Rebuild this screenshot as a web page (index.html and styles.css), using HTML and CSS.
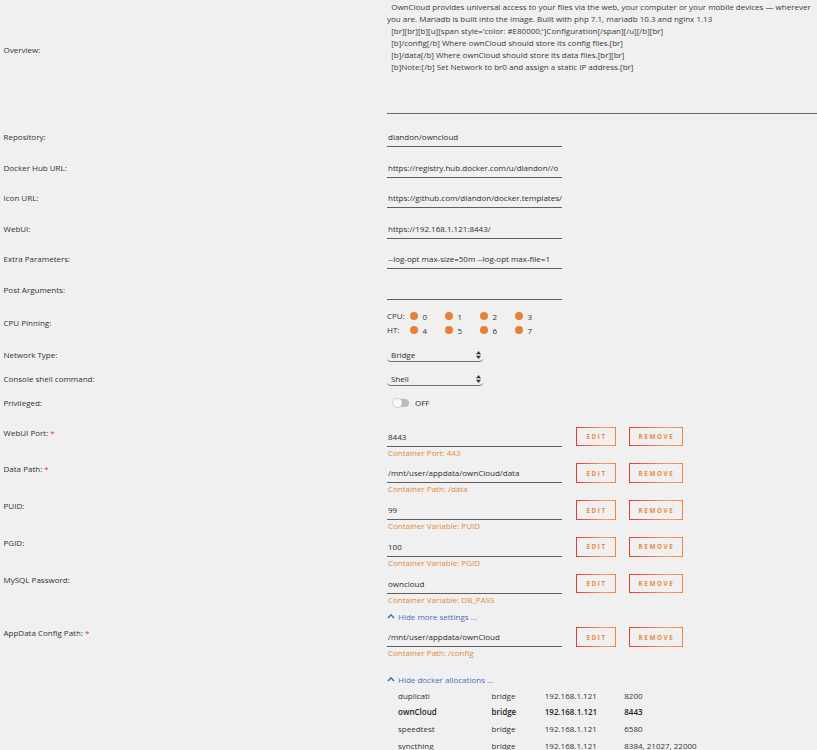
FILE: index.html
```html
<!DOCTYPE html>
<html lang="en">
<head>
<meta charset="utf-8">
<title>Update Container: ownCloud</title>
<link rel="stylesheet" href="styles.css">
</head>
<body>
<div class="form">

  <div class="row overview-row">
    <div class="label overview-label">Overview:</div>
    <div class="overview-text">  OwnCloud provides universal access to your files via the web, your computer or your mobile devices — wherever
you are. Mariadb is built into the image. Built with php 7.1, mariadb 10.3 and nginx 1.13
  [br][br][b][u][span style='color: #E80000;']Configuration[/span][/u][/b][br]
  [b]/config[/b] Where ownCloud should store its config files.[br]
  [b]/data[/b] Where ownCloud should store its data files.[br][br]
  [b]Note:[/b] Set Network to br0 and assign a static IP address.[br]</div>
  </div>

  <div class="basic">
    <div class="row">
      <div class="label">Repository:</div>
      <div class="input">dlandon/owncloud</div>
    </div>
    <div class="row">
      <div class="label">Docker Hub URL:</div>
      <div class="input">https://registry.hub.docker.com/u/dlandon//o</div>
    </div>
    <div class="row">
      <div class="label">Icon URL:</div>
      <div class="input">https://github.com/dlandon/docker.templates/</div>
    </div>
    <div class="row">
      <div class="label">WebUI:</div>
      <div class="input">https://192.168.1.121:8443/</div>
    </div>
    <div class="row">
      <div class="label">Extra Parameters:</div>
      <div class="input">--log-opt max-size=50m --log-opt max-file=1</div>
    </div>
    <div class="row">
      <div class="label">Post Arguments:</div>
      <div class="input"></div>
    </div>
  </div>

  <div class="row cpu-row">
    <div class="label cpu-label">CPU Pinning:</div>
    <div class="cpu">
      <div class="cpu-line">
        <span class="cpu-name">CPU:</span>
        <span class="core"><i class="dot"></i>0</span>
        <span class="core"><i class="dot"></i>1</span>
        <span class="core"><i class="dot"></i>2</span>
        <span class="core"><i class="dot"></i>3</span>
      </div>
      <div class="cpu-line">
        <span class="cpu-name">HT:</span>
        <span class="core"><i class="dot"></i>4</span>
        <span class="core"><i class="dot"></i>5</span>
        <span class="core"><i class="dot"></i>6</span>
        <span class="core"><i class="dot"></i>7</span>
      </div>
    </div>
  </div>

  <div class="row select-row first-select">
    <div class="label">Network Type:</div>
    <div class="select">
      <span>Bridge</span>
      <svg class="arrows" width="5" height="8" viewBox="0 0 5 8"><polygon points="0,3.3 2.5,0 5,3.3"/><polygon points="0,4.7 2.5,8 5,4.7"/></svg>
    </div>
  </div>
  <div class="row select-row">
    <div class="label">Console shell command:</div>
    <div class="select">
      <span>Shell</span>
      <svg class="arrows" width="5" height="8" viewBox="0 0 5 8"><polygon points="0,3.3 2.5,0 5,3.3"/><polygon points="0,4.7 2.5,8 5,4.7"/></svg>
    </div>
  </div>
  <div class="row priv-row">
    <div class="label">Privileged:</div>
    <div class="toggle-wrap">
      <span class="switch"></span>
      <span class="off">OFF</span>
    </div>
  </div>

  <div class="ports">
    <div class="row port-row">
      <div class="label">WebUI Port: <span class="req">*</span></div>
      <div class="port-field">
        <div class="input">8443</div>
        <div class="hint">Container Port: 443</div>
      </div>
      <button class="btn btn-edit">EDIT</button>
      <button class="btn btn-remove">REMOVE</button>
    </div>
    <div class="row port-row">
      <div class="label">Data Path: <span class="req">*</span></div>
      <div class="port-field">
        <div class="input">/mnt/user/appdata/ownCloud/data</div>
        <div class="hint">Container Path: /data</div>
      </div>
      <button class="btn btn-edit">EDIT</button>
      <button class="btn btn-remove">REMOVE</button>
    </div>
    <div class="row port-row">
      <div class="label">PUID:</div>
      <div class="port-field">
        <div class="input">99</div>
        <div class="hint">Container Variable: PUID</div>
      </div>
      <button class="btn btn-edit">EDIT</button>
      <button class="btn btn-remove">REMOVE</button>
    </div>
    <div class="row port-row">
      <div class="label">PGID:</div>
      <div class="port-field">
        <div class="input">100</div>
        <div class="hint">Container Variable: PGID</div>
      </div>
      <button class="btn btn-edit">EDIT</button>
      <button class="btn btn-remove">REMOVE</button>
    </div>
    <div class="row port-row">
      <div class="label">MySQL Password:</div>
      <div class="port-field">
        <div class="input">owncloud</div>
        <div class="hint">Container Variable: DB_PASS</div>
      </div>
      <button class="btn btn-edit">EDIT</button>
      <button class="btn btn-remove">REMOVE</button>
    </div>
    <div class="row link-row">
      <div class="label"></div>
      <a class="toggle-link" href="#"><svg width="8" height="6" viewBox="0 0 8 6"><polyline points="1,5 4,1.8 7,5"/></svg>Hide more settings ...</a>
    </div>
    <div class="row port-row">
      <div class="label">AppData Config Path: <span class="req">*</span></div>
      <div class="port-field">
        <div class="input">/mnt/user/appdata/ownCloud</div>
        <div class="hint">Container Path: /config</div>
      </div>
      <button class="btn btn-edit">EDIT</button>
      <button class="btn btn-remove">REMOVE</button>
    </div>
  </div>

  <div class="row alloc-link-row">
    <div class="label"></div>
    <a class="toggle-link" href="#"><svg width="8" height="6" viewBox="0 0 8 6"><polyline points="1,5 4,1.8 7,5"/></svg>Hide docker allocations ...</a>
  </div>
  <div class="row">
    <div class="label"></div>
    <table class="alloc">
      <tr><td>duplicati</td><td>bridge</td><td>192.168.1.121</td><td>8200</td></tr>
      <tr class="current"><td>ownCloud</td><td>bridge</td><td>192.168.1.121</td><td>8443</td></tr>
      <tr><td>speedtest</td><td>bridge</td><td>192.168.1.121</td><td>6580</td></tr>
      <tr><td>syncthing</td><td>bridge</td><td>192.168.1.121</td><td>8384, 21027, 22000</td></tr>
    </table>
  </div>

</div>
</body>
</html>
```

FILE: styles.css
```css
html, body {
  margin: 0;
  padding: 0;
  background: #f0f0f0;
}

body {
  font-family: "Open Sans", "Liberation Sans", sans-serif;
  font-size: 8px;
  line-height: 12px;
  color: #333;
  overflow: hidden;
}

.form {
  display: flex;
  flex-direction: column;
}

.row {
  display: flex;
  align-items: flex-start;
}

.label {
  width: 387px;
  flex: none;
  box-sizing: border-box;
  padding-left: 3.5px;
  white-space: nowrap;
}

.req {
  color: #e03030;
}

/* Overview description box */
.overview-label {
  padding-top: 44px;
}

.overview-text {
  flex: 1;
  height: 114px;
  padding-top: 1px;
  box-sizing: border-box;
  border-bottom: 1px solid #6a6a6a;
  white-space: pre;
  overflow: hidden;
  color: #3a3a3a;
  line-height: 11.9px;
}

/* Plain text inputs */
.basic {
  margin-top: 17px;
  display: flex;
  flex-direction: column;
  gap: 14.5px;
}

.input {
  width: 175px;
  height: 16px;
  box-sizing: border-box;
  padding: 0 0 3px 1px;
  border-bottom: 1px solid #5e5e5e;
  white-space: nowrap;
  overflow: hidden;
  color: #2e2e2e;
}

/* CPU pinning */
.cpu-row {
  margin-top: 9.5px;
}

.cpu-label {
  padding-top: 8px;
}

.cpu-line {
  display: flex;
  align-items: center;
  height: 14px;
}

.cpu-name {
  width: 22.5px;
}

.core {
  display: flex;
  align-items: center;
  width: 35px;
  position: relative;
  top: 0.5px;
}

.dot {
  width: 8px;
  height: 8px;
  border-radius: 50%;
  background: #e8803a;
  margin-right: 5px;
  position: relative;
  top: -1px;
}

/* Selects */
.select-row {
  margin-top: 11px;
}

.first-select {
  margin-top: 12px;
}

.select {
  width: 96px;
  height: 13px;
  box-sizing: border-box;
  padding: 0 2px 1px 4px;
  border-bottom: 1px solid #707070;
  border-radius: 0 0 4px 4px;
  display: flex;
  align-items: center;
  justify-content: space-between;
  color: #2e2e2e;
}

.arrows {
  fill: #333;
}

/* Privileged switch */
.priv-row {
  margin-top: 11px;
}

.toggle-wrap {
  display: flex;
  align-items: center;
  height: 12px;
  padding-left: 6px;
}

.switch {
  position: relative;
  width: 16px;
  height: 8px;
  border-radius: 4px;
  background: #bdbdbd;
  box-sizing: border-box;
}

.switch::before {
  content: "";
  position: absolute;
  left: 0;
  top: 0;
  width: 9px;
  height: 8px;
  border-radius: 4px;
  background: #fafafa;
  box-shadow: 0 0 0 0.5px #b0b0b0;
}

.off {
  margin-left: 6px;
  color: #2e2e2e;
}

/* Port / path / variable rows */
.ports {
  margin-top: 17.7px;
  display: flex;
  flex-direction: column;
  gap: 4.8px;
}

.port-row {
  height: 32px;
}

.port-field {
  width: 175px;
}

.port-field .input {
  height: 20px;
  padding: 4px 0 3px 1px;
}

.hint {
  color: #e08a3a;
  padding-left: 1px;
}

.btn {
  height: 19.5px;
  padding: 0;
  margin: 0;
  font-family: "Open Sans", "Liberation Sans", sans-serif;
  font-weight: 700;
  font-size: 6.3px;
  letter-spacing: 1.6px;
  text-indent: 1.6px;
  background: transparent;
  border: 1px solid transparent;
  border-image: linear-gradient(90deg, #e03a3a, #f2a070 75%, #f0843a) 1;
  color: #ea8a48;
}

.btn-edit {
  width: 40.3px;
  margin-left: 13.7px;
}

.btn-remove {
  width: 54px;
  margin-left: 12.7px;
}

/* Show / hide links */
.link-row {
  height: 12px;
}

.toggle-link {
  display: flex;
  align-items: center;
  color: #4a6cc0;
  text-decoration: none;
}

.toggle-link svg {
  fill: none;
  stroke: #4a6cc0;
  stroke-width: 1.6;
  margin-right: 3px;
  position: relative;
  top: -1px;
}

.alloc-link-row {
  margin-top: 14.5px;
}

/* Docker allocations */
.alloc {
  border-collapse: collapse;
  margin-top: 1.3px;
  margin-left: 11px;
}

.alloc td {
  padding: 0;
  height: 16.7px;
  white-space: nowrap;
  color: #333;
}

.alloc td:nth-child(1) { width: 93.5px; }
.alloc td:nth-child(2) { width: 53.3px; }
.alloc td:nth-child(3) { width: 79.5px; }

.alloc .current td {
  font-weight: 600;
  color: #1e1e1e;
}
```
